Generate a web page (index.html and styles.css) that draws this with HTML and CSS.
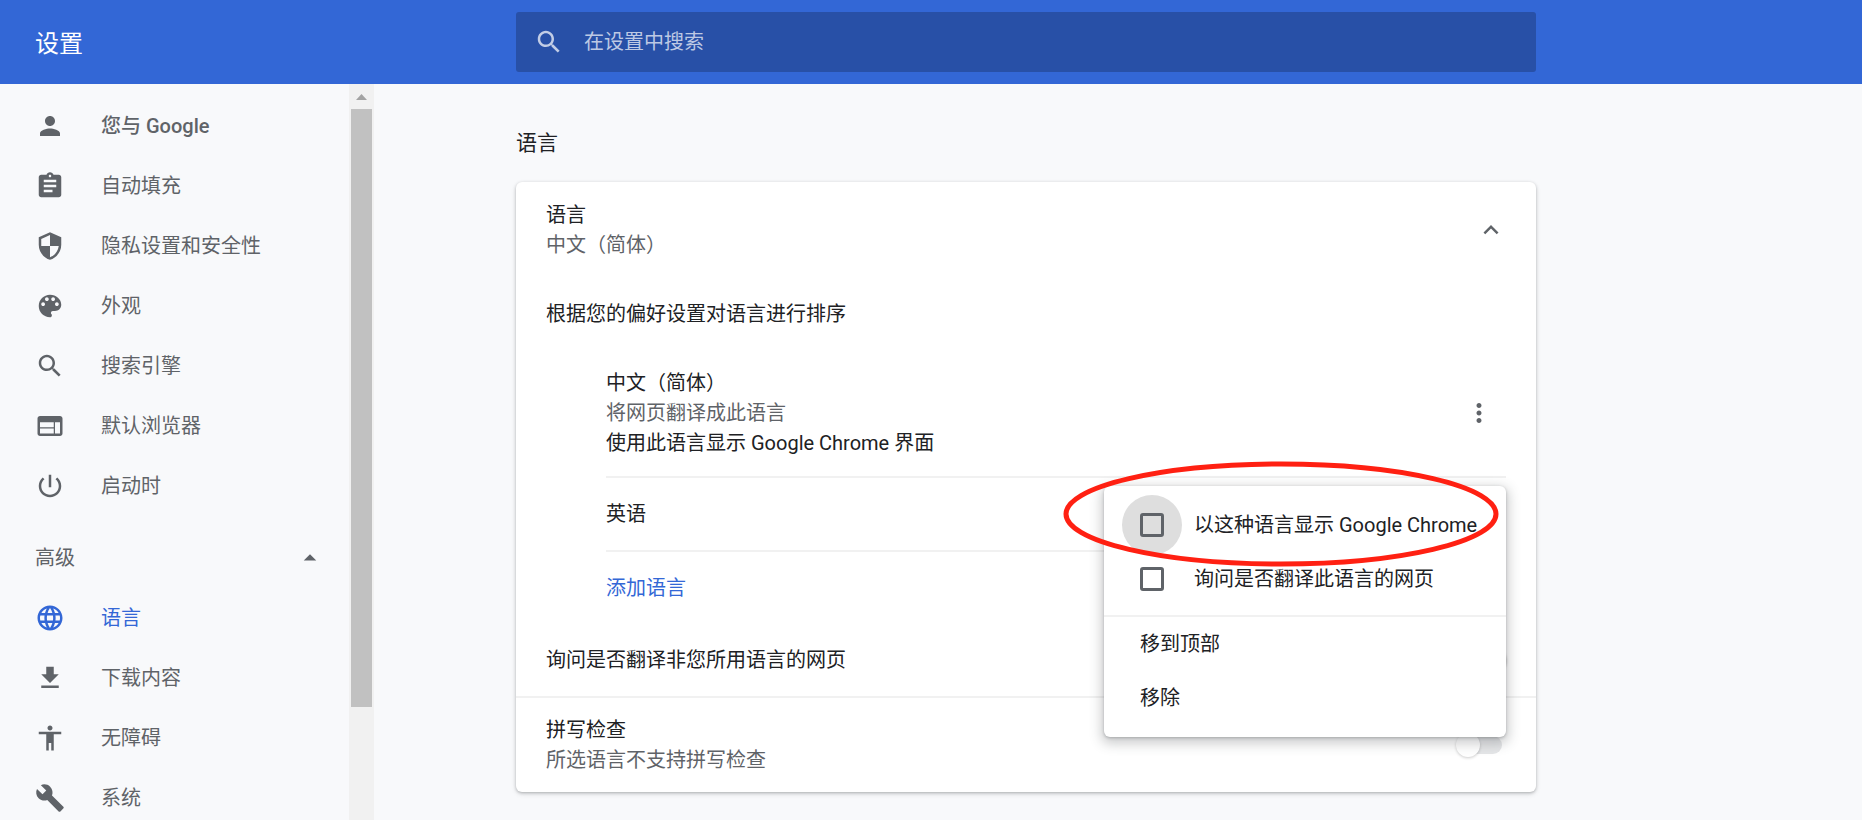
FILE: index.html
```html
<!DOCTYPE html>
<html lang="zh-CN">
<head>
<meta charset="utf-8">
<title>设置</title>
<link rel="stylesheet" href="styles.css">
</head>
<body class="app">
<header class="toolbar">
  <h1 class="toolbar-title">设置</h1>
  <div class="search">
    <svg class="icon" viewBox="0 0 24 24" aria-hidden="true"><path d="M15.5 14h-.79l-.28-.27C15.41 12.59 16 11.11 16 9.5 16 5.91 13.09 3 9.5 3S3 5.91 3 9.5 5.91 16 9.5 16c1.61 0 3.09-.59 4.23-1.57l.27.28v.79l5 4.99L20.49 19l-4.99-5zm-6 0C7.01 14 5 11.99 5 9.5S7.01 5 9.5 5 14 7.01 14 9.5 11.99 14 9.5 14z"/></svg>
    <input class="search-input" type="search" placeholder="在设置中搜索" aria-label="在设置中搜索">
  </div>
</header>
<div class="body">
  <aside class="sidebar">
    <nav class="nav">
      <a class="nav-item nav-strong" href="#people"><svg class="icon" viewBox="0 0 24 24"><path d="M12 12c2.21 0 4-1.79 4-4s-1.79-4-4-4-4 1.79-4 4 1.79 4 4 4zm0 2c-2.67 0-8 1.34-8 4v2h16v-2c0-2.66-5.33-4-8-4z"/></svg>您与 Google</a>
      <a class="nav-item" href="#autofill"><svg class="icon" viewBox="0 0 24 24"><path d="M19 3h-4.18C14.4 1.84 13.3 1 12 1c-1.3 0-2.4.84-2.82 2H5c-1.1 0-2 .9-2 2v14c0 1.1.9 2 2 2h14c1.1 0 2-.9 2-2V5c0-1.1-.9-2-2-2zm-7 0c.55 0 1 .45 1 1s-.45 1-1 1-1-.45-1-1 .45-1 1-1zm2 14H7v-2h7v2zm3-4H7v-2h10v2zm0-4H7V7h10v2z"/></svg>自动填充</a>
      <a class="nav-item" href="#privacy"><svg class="icon" viewBox="0 0 24 24"><path d="M12 1L3 5v6c0 5.55 3.84 10.74 9 12 5.16-1.26 9-6.45 9-12V5l-9-4zm0 10.99h7c-.53 4.12-3.28 7.79-7 8.94V12H5V6.3l7-3.11v8.8z"/></svg>隐私设置和安全性</a>
      <a class="nav-item" href="#appearance"><svg class="icon" viewBox="0 0 24 24"><path d="M12 3c-4.97 0-9 4.03-9 9s4.03 9 9 9c.83 0 1.5-.67 1.5-1.5 0-.39-.15-.74-.39-1.01-.23-.26-.38-.61-.38-.99 0-.83.67-1.5 1.5-1.5H16c2.76 0 5-2.24 5-5 0-4.42-4.03-8-9-8zm-5.5 9c-.83 0-1.5-.67-1.5-1.5S5.67 9 6.5 9 8 9.67 8 10.5 7.33 12 6.5 12zm3-4C8.67 8 8 7.33 8 6.5S8.67 5 9.5 5s1.5.67 1.5 1.5S10.33 8 9.5 8zm5 0c-.83 0-1.5-.67-1.5-1.5S13.67 5 14.5 5s1.5.67 1.5 1.5S15.33 8 14.5 8zm3 4c-.83 0-1.5-.67-1.5-1.5S16.67 9 17.5 9s1.5.67 1.5 1.5-.67 1.5-1.5 1.5z"/></svg>外观</a>
      <a class="nav-item" href="#search"><svg class="icon" viewBox="0 0 24 24"><path d="M15.5 14h-.79l-.28-.27C15.41 12.59 16 11.11 16 9.5 16 5.91 13.09 3 9.5 3S3 5.91 3 9.5 5.91 16 9.5 16c1.61 0 3.09-.59 4.23-1.57l.27.28v.79l5 4.99L20.49 19l-4.99-5zm-6 0C7.01 14 5 11.99 5 9.5S7.01 5 9.5 5 14 7.01 14 9.5 11.99 14 9.5 14z"/></svg>搜索引擎</a>
      <a class="nav-item" href="#browser"><svg class="icon" viewBox="0 0 24 24"><path d="M20 4H4c-1.1 0-1.99.9-1.99 2L2 18c0 1.1.9 2 2 2h16c1.1 0 2-.9 2-2V6c0-1.1-.9-2-2-2zm-5 14H4v-4h11v4zm0-5H4V9h11v4zm5 5h-4V9h4v9z"/></svg>默认浏览器</a>
      <a class="nav-item" href="#startup"><svg class="icon" viewBox="0 0 24 24"><path d="M13 3h-2v10h2V3zm4.83 2.17l-1.42 1.42C17.99 7.86 19 9.81 19 12c0 3.87-3.13 7-7 7s-7-3.13-7-7c0-2.19 1.01-4.14 2.58-5.42L6.17 5.17C4.23 6.82 3 9.26 3 12c0 4.97 4.03 9 9 9s9-4.03 9-9c0-2.74-1.23-5.18-3.17-6.83z"/></svg>启动时</a>
      <button class="nav-group" type="button" aria-expanded="true">高级<svg class="icon" viewBox="0 0 24 24"><path d="M7 14l5-5 5 5z"/></svg></button>
      <a class="nav-item nav-active" href="#languages"><svg class="icon" viewBox="0 0 24 24"><path d="M11.99 2C6.47 2 2 6.48 2 12s4.47 10 9.99 10C17.52 22 22 17.52 22 12S17.52 2 11.99 2zm6.93 6h-2.95c-.32-1.25-.78-2.45-1.38-3.56 1.84.63 3.37 1.91 4.33 3.56zM12 4.04c.83 1.2 1.48 2.53 1.91 3.96h-3.82c.43-1.43 1.08-2.76 1.91-3.96zM4.26 14C4.1 13.36 4 12.69 4 12s.1-1.36.26-2h3.38c-.08.66-.14 1.32-.14 2 0 .68.06 1.34.14 2H4.26zm.82 2h2.95c.32 1.25.78 2.45 1.38 3.56-1.84-.63-3.37-1.9-4.33-3.56zm2.95-8H5.08c.96-1.66 2.49-2.93 4.33-3.56C8.81 5.55 8.35 6.75 8.03 8zM12 19.96c-.83-1.2-1.48-2.53-1.91-3.96h3.82c-.43 1.43-1.08 2.76-1.91 3.96zM14.34 14H9.66c-.09-.66-.16-1.32-.16-2 0-.68.07-1.35.16-2h4.68c.09.65.16 1.32.16 2 0 .68-.07 1.34-.16 2zm.25 5.56c.6-1.11 1.06-2.31 1.38-3.56h2.95c-.96 1.65-2.49 2.93-4.33 3.56zM16.36 14c.08-.66.14-1.32.14-2 0-.68-.06-1.34-.14-2h3.38c.16.64.26 1.31.26 2s-.1 1.36-.26 2h-3.38z"/></svg>语言</a>
      <a class="nav-item" href="#downloads"><svg class="icon" viewBox="0 0 24 24"><path d="M19 9h-4V3H9v6H5l7 7 7-7zM5 18v2h14v-2H5z"/></svg>下载内容</a>
      <a class="nav-item" href="#accessibility"><svg class="icon" viewBox="0 0 24 24"><path d="M12 2c1.1 0 2 .9 2 2s-.9 2-2 2-2-.9-2-2 .9-2 2-2zm9 7h-6v13h-2v-6h-2v6H9V9H3V7h18v2z"/></svg>无障碍</a>
      <a class="nav-item" href="#system"><svg class="icon" viewBox="0 0 24 24"><path d="M22.7 19l-9.1-9.1c.9-2.3.4-5-1.5-6.9-2-2-5-2.4-7.4-1.3L9 6 6 9 1.6 4.7C.4 7.1.9 10.1 2.9 12.1c1.9 1.9 4.6 2.4 6.9 1.5l9.1 9.1c.4.4 1 .4 1.4 0l2.3-2.3c.5-.4.5-1.1.1-1.4z"/></svg>系统</a>
    </nav>
    <div class="scrollbar" aria-hidden="true">
      <svg class="scroll-arrow" viewBox="0 0 25 25"><path d="M7 16l5.500-6 5.500 6z"/></svg>
      <div class="scroll-thumb"></div>
    </div>
  </aside>
  <main class="main">
    <h2 class="section-title">语言</h2>
    <section class="card">
      <div class="row row-tall">
        <div class="row-text"><div>语言</div><div class="secondary">中文（简体）</div></div>
        <button class="icon-button" type="button" aria-label="收起"><svg class="icon" viewBox="0 0 24 24"><path d="M12 8l-6 6 1.41 1.410L12 10.830l4.590 4.580L18 14z"/></svg></button>
      </div>
      <div class="row">根据您的偏好设置对语言进行排序</div>
      <div class="list">
        <div class="list-row list-current">
          <div class="row-text"><div>中文（简体）</div><div class="secondary">将网页翻译成此语言</div><div>使用此语言显示 Google Chrome 界面</div></div>
          <button class="icon-button more" type="button" aria-label="更多操作"><svg class="icon" viewBox="0 0 24 24"><path d="M12 8c1.100 0 2-.9 2-2s-.9-2-2-2-2 .9-2 2 .9 2 2 2zm0 2c-1.100 0-2 .9-2 2s.9 2 2 2 2-.9 2-2-.9-2-2-2zm0 6c-1.100 0-2 .9-2 2s.9 2 2 2 2-.9 2-2-.9-2-2-2z"/></svg></button>
        </div>
        <div class="list-row">英语
          <div class="menu" role="menu">
            <label class="menu-item"><input class="check check-focus" type="checkbox">以这种语言显示 Google Chrome</label>
            <label class="menu-item"><input class="check" type="checkbox">询问是否翻译此语言的网页</label>
            <hr class="menu-line">
            <button class="menu-item" type="button">移到顶部</button>
            <button class="menu-item" type="button">移除</button>
            <svg class="marker" viewBox="0 0 436 106" aria-hidden="true"><ellipse cx="218" cy="53" rx="215" ry="50"/></svg>
          </div>
        </div>
        <div class="list-row"><a class="add" href="#add">添加语言</a></div>
      </div>
      <div class="row">
        <label for="ask">询问是否翻译非您所用语言的网页</label>
        <input class="toggle" id="ask" type="checkbox" checked>
      </div>
      <div class="row row-tall row-line">
        <label class="row-text" for="spell"><span>拼写检查</span><span class="secondary">所选语言不支持拼写检查</span></label>
        <input class="toggle" id="spell" type="checkbox" disabled>
      </div>
    </section>
  </main>
</div>
</body>
</html>
```
FILE: styles.css
```css
* { box-sizing: border-box; }

.app {
  display: flex;
  flex-direction: column;
  height: 100vh;
  margin: 0;
  overflow: hidden;
  background: #f8f9fb;
  color: #202124;
  font: 20px/30px Roboto, "Noto Sans CJK SC", sans-serif;
}

.toolbar,
.body {
  display: grid;
  grid-template-columns: 374px minmax(0, 142fr) minmax(0, 1020px) minmax(0, 326fr);
}

.toolbar {
  flex: none;
  align-items: center;
  padding: 12px 0;
  background: #3367d6;
  color: #fff;
}

.toolbar-title {
  margin: 0;
  padding: 4px 0 0 35px;
  font-size: 24px;
  font-weight: 400;
}

.search {
  display: flex;
  grid-column: 3;
  align-items: center;
  gap: 20px;
  height: 60px;
  padding: 0 18px;
  border-radius: 3px;
  background: #2850a7;
  color: #c2cde6;
}

.search-input {
  flex: 1;
  min-width: 0;
  padding: 0;
  border: 0;
  outline: 0;
  background: none;
  color: #fff;
  font: inherit;
}

.search-input::placeholder { color: #bdc9e4; }

.icon {
  flex: none;
  display: block;
  width: 30px;
  height: 30px;
  fill: currentColor;
}

.body {
  flex: 1;
  min-height: 0;
}

.sidebar {
  display: flex;
  min-height: 0;
  overflow: hidden;
}

.nav {
  flex: 1;
  padding-top: 12px;
  color: #5f6368;
}

.nav-item,
.nav-group {
  display: flex;
  align-items: center;
  width: 100%;
  height: 60px;
  padding: 0 24px 0 35px;
  color: inherit;
}

.nav-item {
  gap: 36px;
  text-decoration: none;
}

.nav-strong { font-weight: 500; }

.nav-active { color: #3367d6; }

.nav-group {
  justify-content: space-between;
  margin-top: 12px;
  border: 0;
  background: none;
  font: inherit;
}

.scrollbar {
  width: 25px;
  background: #f1f1f1;
}

.scroll-arrow {
  display: block;
  width: 25px;
  height: 25px;
  fill: #a3a3a3;
}

.scroll-thumb {
  height: 598px;
  margin: 0 2px;
  background: #c1c1c1;
}

.main {
  grid-column: 3;
  padding-top: 44px;
}

.section-title {
  margin: 0 0 24px;
  font-size: 21px;
  font-weight: 400;
}

.card {
  border-radius: 6px;
  background: #fff;
  box-shadow: 0 1px 3px rgba(60, 64, 67, 0.3), 0 2px 5px rgba(60, 64, 67, 0.15);
}

.row {
  display: flex;
  align-items: center;
  justify-content: space-between;
  min-height: 72px;
  padding: 0 30px;
}

.row-tall { min-height: 96px; }

.row-line { border-top: 2px solid #f1f1f1; }

.row-text {
  display: flex;
  flex-direction: column;
}

.secondary { color: #5f6368; }

.icon-button {
  padding: 0;
  border: 0;
  background: none;
  color: #5f6368;
}

.more { margin-right: 12px; }

.list { padding: 0 30px 0 90px; }

.list-row {
  position: relative;
  display: flex;
  align-items: center;
  justify-content: space-between;
  min-height: 74px;
}

.list-row + .list-row { border-top: 2px solid #f1f1f1; }

.list-current { min-height: 126px; }

.add {
  color: #3367d6;
  text-decoration: none;
}

.menu {
  position: absolute;
  z-index: 1;
  top: 8px;
  right: 0;
  width: 402px;
  padding: 12px 0;
  border-radius: 6px;
  background: #fff;
  box-shadow: 0 1px 3px rgba(60, 64, 67, 0.3), 0 4px 12px 3px rgba(60, 64, 67, 0.25);
}

.menu-item {
  display: flex;
  align-items: center;
  gap: 30px;
  width: 100%;
  height: 54px;
  padding: 0 0 0 36px;
  border: 0;
  background: none;
  color: inherit;
  font: inherit;
  white-space: nowrap;
}

.menu-line {
  margin: 9px 0 0;
  border: 0;
  border-top: 2px solid #f1f1f1;
}

.check {
  appearance: none;
  flex: none;
  position: relative;
  width: 24px;
  height: 24px;
  margin: 0;
  border: 3px solid #5f6368;
  border-radius: 3px;
}

.check-focus::before {
  content: "";
  position: absolute;
  z-index: -1;
  inset: -21px;
  border-radius: 50%;
  background: #dedede;
}

.marker {
  position: absolute;
  top: -25px;
  left: -41px;
  width: 436px;
  height: 106px;
  fill: none;
  stroke: #ff2012;
  stroke-width: 5;
  pointer-events: none;
}

.toggle {
  appearance: none;
  position: relative;
  width: 42px;
  height: 18px;
  margin: 0 4px 0 0;
  border-radius: 9px;
  background: #e5e6e8;
}

.toggle::before {
  content: "";
  position: absolute;
  top: -3px;
  left: -4px;
  width: 24px;
  height: 24px;
  border-radius: 50%;
  background: #fff;
  box-shadow: 0 1px 3px rgba(0, 0, 0, 0.2);
}

.toggle:checked { background: #99b3eb; }

.toggle:checked::before {
  left: 22px;
  background: #3367d6;
  box-shadow: 0 1px 3px rgba(0, 0, 0, 0.4);
}
```
